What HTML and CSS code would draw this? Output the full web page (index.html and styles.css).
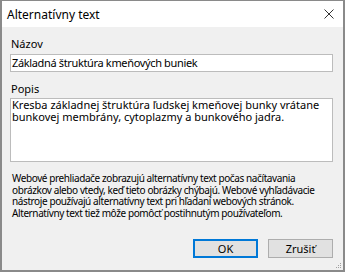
FILE: index.html
```html
<!DOCTYPE html>
<html lang="sk">
<head>
<meta charset="utf-8">
<title>Alternatívny text</title>
<link rel="stylesheet" href="styles.css">
</head>
<body>
<div class="dialog">
  <div class="titlebar">
    <span class="title">Alternatívny text</span>
    <svg class="close" width="10" height="10" viewBox="0 0 10 10"><path d="M0.5 0.5 L9.5 9.5 M9.5 0.5 L0.5 9.5" stroke="#333" stroke-width="1" fill="none"/></svg>
  </div>
  <div class="content">
    <div class="label label-first">Názov</div>
    <div class="field field-input">Základná štruktúra kmeňových buniek</div>
    <div class="label label-second">Popis</div>
    <div class="field field-area">Kresba základnej štruktúra ľudskej kmeňovej bunky vrátane<br>bunkovej membrány, cytoplazmy a bunkového jadra.</div>
    <p class="info">Webové prehliadače zobrazujú alternatívny text počas načítavania<br>obrázkov alebo vtedy, keď tieto obrázky chýbajú. Webové vyhľadávacie<br>nástroje používajú alternatívny text pri hľadaní webových stránok.<br>Alternatívny text tiež môže pomôcť postihnutým používateľom.</p>
    <div class="buttons">
      <button class="btn btn-default">OK</button>
      <button class="btn">Zrušiť</button>
    </div>
    <svg class="grip" width="6" height="6" viewBox="0 0 6 6"><rect x="4" y="0" width="1" height="1" fill="#a0a0a0"/><rect x="2" y="2" width="1" height="1" fill="#a0a0a0"/><rect x="4" y="2" width="1" height="1" fill="#a0a0a0"/><rect x="0" y="4" width="1" height="1" fill="#a0a0a0"/><rect x="2" y="4" width="1" height="1" fill="#a0a0a0"/><rect x="4" y="4" width="1" height="1" fill="#a0a0a0"/></svg>
  </div>
</div>
</body>
</html>
```
FILE: styles.css
```css
html, body {
  margin: 0;
  padding: 0;
  background: #f0f0f0;
}
body {
  font-family: "Segoe UI", "Noto Sans", "Open Sans", sans-serif;
  font-size: 11px;
  color: #000;
}
.dialog {
  box-sizing: border-box;
  width: 345px;
  height: 272px;
  border: 2px solid #8a8a8a;
  border-top-width: 1px;
  display: flex;
  flex-direction: column;
}
.titlebar {
  height: 26px;
  background: #fff;
  display: flex;
  align-items: center;
  justify-content: space-between;
  padding: 0 9px 0 5px;
  flex-shrink: 0;
}
.title {
  font-size: 12px;
  color: #000;
}
.close {
  display: block;
}
.content {
  position: relative;
  flex: 1;
  background: #f0f0f0;
  padding: 10px 10px 0 8px;
  display: flex;
  flex-direction: column;
}
.label {
  line-height: 14px;
  padding-left: 1px;
}
.label-second {
  margin-top: 10px;
}
.field {
  box-sizing: border-box;
  background: #fff;
  border: 1px solid #bcbcbc;
  padding: 0 0 0 1px;
  margin-top: 3px;
  white-space: nowrap;
}
.field-input {
  height: 18px;
  line-height: 16px;
  letter-spacing: -0.35px;
}
.field-area {
  height: 64px;
  line-height: 12px;
  padding-top: 0;
  margin-top: 2px;
}
.info {
  margin: 11px 0 0 2px;
  font-size: 10px;
  letter-spacing: -0.4px;
  line-height: 11.7px;
  white-space: nowrap;
}
.buttons {
  display: flex;
  justify-content: flex-end;
  gap: 10px;
  margin-top: auto;
  margin-bottom: 12px;
}
.btn {
  box-sizing: border-box;
  width: 65px;
  height: 19px;
  padding: 0;
  font: inherit;
  font-size: 11px;
  color: #000;
  background: #e1e1e1;
  border: 1px solid #adadad;
}
.btn-default {
  border: 2px solid #0078d7;
}
.grip {
  position: absolute;
  right: 1px;
  bottom: 1px;
}
```
